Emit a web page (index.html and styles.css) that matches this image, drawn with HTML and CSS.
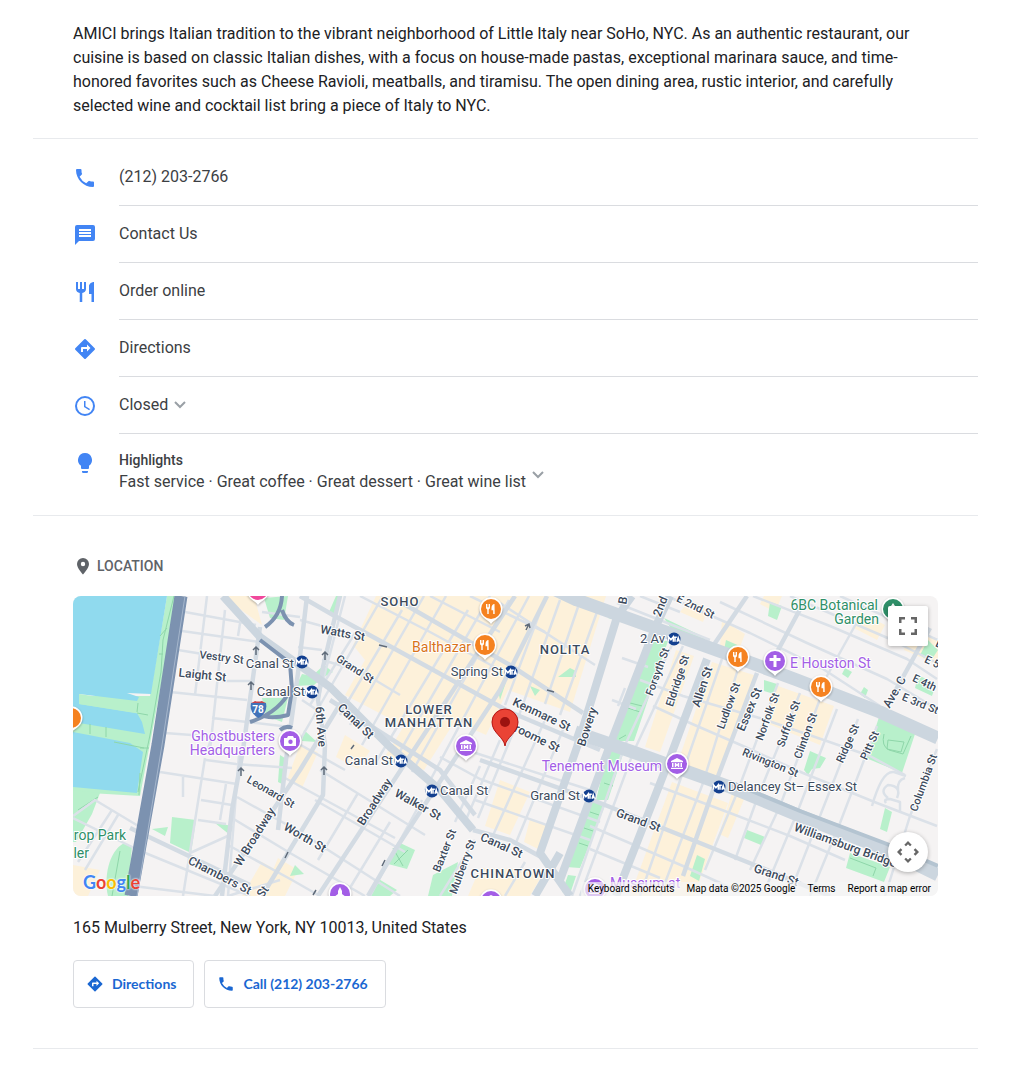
FILE: index.html
```
<!DOCTYPE html>
<html lang="en">
<head>
    <meta charset="UTF-8">
    <meta name="viewport" content="width=device-width, initial-scale=1.0">
    <title>AMICI - Little Italy, NYC</title>
    <link rel="stylesheet" href="styles.css">
</head>
<body>

<main class="page">

    <!-- About -->
    <section class="about">
        <p>AMICI brings Italian tradition to the vibrant neighborhood of Little Italy near SoHo, NYC. As an authentic restaurant, our cuisine is based on classic Italian dishes, with a focus on house-made pastas, exceptional marinara sauce, and time-honored favorites such as Cheese Ravioli, meatballs, and tiramisu. The open dining area, rustic interior, and carefully selected wine and cocktail list bring a piece of Italy to NYC.</p>
    </section>

    <!-- Contact list -->
    <section class="details">
        <ul class="detail-list">
            <li class="detail">
                <svg class="icon" viewBox="0 0 24 24"><path d="M6.500 3H4a1 1 0 0 0-1 1c0 9.400 7.600 17 17 17a1 1 0 0 0 1-1v-3.500a1 1 0 0 0-1-1c-1.200 0-2.400-.2-3.600-.6a1 1 0 0 0-1 .25l-2.200 2.200a15 15 0 0 1-6.600-6.600l2.200-2.200a1 1 0 0 0 .25-1C8.700 7.400 8.500 6.200 8.500 4a1 1 0 0 0-1-1z"/></svg>
                <a class="detail-body" href="tel:+12122032766">(212) 203-2766</a>
            </li>
            <li class="detail">
                <svg class="icon" viewBox="0 0 24 24"><path d="M20 2H4a2 2 0 0 0-2 2v18l4-4h14a2 2 0 0 0 2-2V4a2 2 0 0 0-2-2zm-2 12H6v-2h12zm0-3H6V9h12zm0-3H6V6h12z"/></svg>
                <a class="detail-body" href="#contact">Contact Us</a>
            </li>
            <li class="detail">
                <svg class="icon" viewBox="0 0 24 24"><path d="M11 9H9V2H7v7H5V2H3v7c0 2.120 1.660 3.840 3.750 3.970V22h2.500v-9.030C11.340 12.840 13 11.120 13 9V2h-2zm5-3v8h2.500v8H21V2c-2.760 0-5 2.240-5 4z"/></svg>
                <a class="detail-body" href="#order">Order online</a>
            </li>
            <li class="detail">
                <svg class="icon" viewBox="0 0 24 24"><path d="M21.700 11.300l-9-9a1 1 0 0 0-1.400 0l-9 9a1 1 0 0 0 0 1.400l9 9a1 1 0 0 0 1.400 0l9-9a1 1 0 0 0 0-1.400zM14 14.500V12h-4v3H8v-4a1 1 0 0 1 1-1h5V7.500l3.500 3.500z"/></svg>
                <a class="detail-body" href="#directions">Directions</a>
            </li>
            <li class="detail">
                <svg class="icon" viewBox="0 0 24 24"><path d="M12 2a10 10 0 1 0 0 20 10 10 0 0 0 0-20zm0 18a8 8 0 1 1 0-16 8 8 0 0 1 0 16zm.5-13H11v6l5.200 3.200.8-1.300-4.500-2.700z"/></svg>
                <button type="button" class="detail-body">
                    Closed
                    <svg class="chevron" viewBox="0 0 12 8"><path d="M1 1l5 5 5-5"/></svg>
                </button>
            </li>
            <li class="detail highlights">
                <svg class="icon" viewBox="0 0 24 24"><path d="M9 20h6v.8a1.200 1.200 0 0 1-1.200 1.200h-3.600A1.200 1.200 0 0 1 9 20.800zM12 2a7 7 0 0 0-4 12.740V17a1 1 0 0 0 1 1h6a1 1 0 0 0 1-1v-2.260A7 7 0 0 0 12 2z"/></svg>
                <button type="button" class="detail-body">
                    <span class="highlight-text">
                        <strong>Highlights</strong>
                        <span>Fast service · Great coffee · Great dessert · Great wine list</span>
                    </span>
                    <svg class="chevron" viewBox="0 0 12 8"><path d="M1 1l5 5 5-5"/></svg>
                </button>
            </li>
        </ul>
    </section>

    <!-- Location -->
    <section class="location">
        <h2>
            <svg viewBox="0 0 20 20"><path fill-rule="evenodd" d="M10 2a6 6 0 0 0-6 6c0 4.200 6 10.500 6 10.500S16 12.200 16 8a6 6 0 0 0-6-6zm0 8.200a2.200 2.200 0 1 1 0-4.400 2.200 2.200 0 0 1 0 4.400z"/></svg>
            Location
        </h2>

        <div class="map">
            <svg class="map-canvas" viewBox="73 596 865 300" preserveAspectRatio="xMidYMid slice" role="img" aria-label="Map of Lower Manhattan">
                <defs>
                    <g id="pin-shape">
                        <path class="pin-edge" d="M0 15C-2 12-5 11-8 8A11.500 11.500 0 1 1 8 8C5 11 2 12 0 15z"/>
                        <circle r="10"/>
                    </g>
                    <g id="pin-food">
                        <use href="#pin-shape"/>
                        <path class="glyph" d="M-5-5v3.500a2 2 0 0 0 1.300 1.900V5h1.400V.4A2 2 0 0 0-1-1.500V-5h-1v3.300h-.6V-5h-.8v3.300H-4V-5zM3.500-5C1.500-5 .5-3 .5-1v2.200h1.700V5h1.500z"/>
                    </g>
                    <g id="pin-museum">
                        <use href="#pin-shape"/>
                        <path class="glyph" d="M0-6l6 3v1.200H-6V-3zM-5-1h1.500v4H-5zM3.500-1H5v4H3.500zM-2.300-1h1.300l1 1.500L1-1h1.300v4H1V1.500L0 2.700l-1-1.200V3h-1.300zM-6 3.700H6V5H-6z"/>
                    </g>
                    <g id="mta">
                        <circle r="6.500"/>
                        <path d="M-5.500 2.800v-5l2.400 3 2.400-3v5M-.7-1.800h3.500M1 -1.800v4.600M3 2.800l1.200-4 1.300 4"/>
                    </g>
                </defs>

                <rect class="land" x="0" y="500" width="1100" height="500"/>

                <!-- Built-up areas -->
                <g class="built">
                    <path d="M376 596H548L508 690 486 735 455 721 424 770 384 758 404 726 345 695 365 660 353 645z"/>
                    <path d="M548 596H606L570 712 508 690z"/>
                    <path d="M223 596H254L262 625 244 612zM318 752L302 788 287 780 300 745zM345 735L370 751 358 769 336 757z"/>
                    <path d="M676 650L694 656 660 752 645 747zM712 662L757 676 717 779 678 762zM778 686L834 706 820 745 764 722z"/>
                    <path d="M672 782L728 803 694 896H630zM733 790L745 797 728 838 719 834zM690 600L708 609 703 622 680 612z"/>
                    <path d="M500 780L530 792 510 835 485 826zM530 819L550 827 540 850 524 842zM480 868L545 870 530 896H468z"/>
                    <path d="M722 620L745 634 738 652 720 646zM764 596H782L775 612 760 604zM860 612L885 625 877 640 854 628zM910 625L938 640V665L904 650z"/>
                    <path d="M100 870L88 896H73V865zM262 862L288 876 276 896H242zM278 858L298 870 285 896H262z"/>
                </g>

                <!-- Water and piers -->
                <g class="park">
                    <path d="M73 732V696H150L167 596H178L140 796 73 792z"/>
                    <path d="M73 790L100 793 92 814 76 842 73 842zM124 843L132 846 128 896H108C104 878 108 852 124 843z"/>
                    <path d="M172 817L196 820 191 853 170 843zM152 829L168 827 165 836zM215 823L233 826 230 835z"/>
                </g>
                <g class="water">
                    <path d="M73 596H167L151 694 127 693 139 697 137 701 79 694V704L137 713 142 722 145 734 73 722z"/>
                    <path d="M73 732L130 743 143 752 137 793 73 787z"/>
                </g>
                <path class="park" d="M79 694L140 703 152 696 148 715 141 714 79 704z"/>
                <path class="park-line" d="M174 596L163 640 161 672 150 735 138 792M167 628l-7 8M163 654h-4M138 703l-1 9M148 715l-11-2M90 724v10M106 727v10M114 742l30 6M140 748h9M139 795l1-22M78 810l20-13M112 896l8-45"/>

                <!-- Parks -->
                <g class="park">
                    <path d="M264 598L288 596 284 620 270 618zM262 698L288 698 282 722 266 716zM336 596H342L335 614 329 612zM324 665L333 672 322 678 314 685 296 686 302 674 312 676z"/>
                    <path d="M304 730L317 742 302 741zM280 755L288 760 284 785 278 782zM295 865L304 874 290 876z"/>
                    <path d="M398 842L415 850 407 869 388 864zM377 878L397 890 390 896H371zM433 875L458 862 452 896H428z"/>
                    <path d="M649 640L668 641 634 741 615 741zM608 751H624L608 800 596 800zM588 800L606 803 580 868 566 867zM568 875L576 876 570 894 562 892z"/>
                    <path d="M608 611L655 622 648 630 608 618zM664 618L706 638 702 645 676 636zM570 668L576 671 576 677 558 677zM530 686L540 690 535 696zM506 682L498 690 500 700z"/>
                    <path d="M770 602L782 606 777 620 768 616zM726 640L742 647 740 656 724 650zM764 680L777 684 774 694 764 691z"/>
                    <path d="M879 717L915 734 902 773 866 758zM845 668L852 672 848 678 842 674zM864 687L868 690 865 698 860 694zM928 640L938 650 930 662 920 655zM918 675L936 684 932 696 915 688z"/>
                    <path d="M810 751L826 758 820 768 812 769 808 775 804 770zM885 808L892 812 887 832 880 829zM747 830L765 837 761 845 744 838zM850 853L890 867 884 882 846 868zM697 855L705 859 699 881 690 876z"/>
                </g>
                <path class="park-line" d="M630 703l12 3M628 708l12 4M626 735l-7 4M611 765l9 3M604 783l9 3M590 812l9 3M584 828l9 3M579 843l9 3M884 734q-3 12 5 16l14 4 8-18M888 740l16 2-3 10-14-3zM393 848l10 18M408 850l-14 14M850 858l26 10-3 8"/>

                <!-- Side streets -->
                <g class="street">
                    <path d="M207 596L195 695M225 610L210 750M241 617l-3 19M185 612L256 625M182 631L260 642M178 650L215 656M170 692L247 700M212 718L290 727M165 733L205 736M222 681H250M212 737l-5 14"/>
                    <path d="M160 772L237 784M206 760L236 764 292 768M205 758L183 896M239 755L228 896M183 777v20M201 800L232 805M198 820L226 824M226 784L220 820"/>
                    <path d="M73 816L95 800 145 830M73 818L128 845 138 850M118 815L85 870M112 810L78 862M138 850L250 896M125 885L215 896M190 853L230 835"/>
                    <path d="M237 797L300 832 400 896M232 818L290 853 365 896M228 845L292 880 320 896M283 735L345 770M285 778L395 838M320 770L425 835M315 800L405 852M280 880L228 896"/>
                    <path d="M262 612L300 617M300 620L333 629M298 647L322 650M322 660L350 668M345 596L318 700M355 633L310 705M302 700L320 712"/>
                    <path d="M383 596L300 740M402 610L340 715M424 596L350 725M446 596L362 745M468 610L376 762M490 596L395 760M509 600L412 772M529 596L425 790"/>
                    <path d="M360 596L430 632 500 670M355 668L400 695M430 596L500 632M470 596L545 632"/>
                    <path d="M560 600L528 690 512 735 478 818M578 607L545 704M597 612L560 715M540 612L505 705M500 603L595 665M565 725L515 845M545 720L490 842M612 700L636 709M622 658L648 667M625 688l-7 18"/>
                    <path d="M440 757L480 779 600 822M460 748L590 790M480 766L455 822M500 740L465 822M475 800L590 840M525 862L505 896"/>
                    <path d="M390 822L345 896M422 800L370 896M358 793L318 860M475 840L440 896"/>

                    <!-- Lower East Side -->
                    <path d="M672 645L625 745 572 896M683 646L633 753 580 896M722 659L685 766 640 896M738 669L703 783 660 896M778 683L737 793 705 870M800 693L757 799 735 860M820 699L780 806 750 870M837 709L797 813 765 890M858 719L820 816 795 880M877 726L840 823 810 896M937 749L910 816 885 896"/>
                    <path d="M640 680L683 696 763 719 870 756 905 775M653 706L690 723 743 746 803 773 877 803 937 826M650 783L730 813 790 836 845 860M590 826L683 866 740 892M590 849L660 878"/>

                    <!-- East Village -->
                    <path d="M617 603L710 640M667 596L750 633 823 669 880 706M720 602L807 643 887 679 937 709M753 596L830 626 907 659 937 679M790 596L890 639 937 663M840 596L938 640M857 622L823 683M640 596L680 612"/>
                    <path d="M872 806q10-36 22-34l12 4M905 778q-8 2-7 12M888 798q-9-7 0-13 14 1 9 13M886 803q-3-4 4-4l10 3v9"/>
                </g>

                <!-- Main streets -->
                <g class="road">
                    <path d="M307 596L298 673 286 760 278 830M340 596L323 667 318 700 325 745 323 795 262 896M300 596L333 615 510 712 600 750"/>
                    <path d="M260 627L243 750 232 810 222 896M397 600L510 665 583 713M515 596L318 896M547 596L500 690 395 850 368 896M590 799L690 839 757 866 830 896M590 799L480 760M130 828L250 885M757 673L717 779 683 876M747 596L713 646M805 600L777 652M930 628L887 706"/>
                    <path d="M345 696L300 770 215 896M473 830L510 840 543 858M330 700L440 770 475 815"/>
                </g>

                <!-- Avenues -->
                <g class="avenue">
                    <path d="M223 596L260 637 330 687 390 747 440 790 473 830M632 596L617 617 577 747 540 853 570 896M653 633L613 737 560 880M670 596L655 628M707 659L668 763 616 896M560 853L535 896"/>
                </g>
                <g class="avenue wide">
                    <path d="M545 585L577 600 730 655 797 680 880 712 938 738"/>
                    <path d="M575 732L633 752 730 787 800 816 887 850 938 875"/>
                </g>
                <path class="bridge" d="M735 784L800 811 887 844 938 866"/>

                <!-- Highways -->
                <g class="highway">
                    <path class="trunk" d="M181 596L158 745 131 896"/>
                    <path class="lanes" d="M185 596L162 745 137 896"/>
                    <path class="ramp" d="M282 596Q281 616 265 627M282 610Q286 622 294 625M260 640L290 663 292 690 288 715Q270 720 258 714M290 690Q280 712 250 722M280 730Q286 725 292 728"/>
                </g>
                <path class="arrow" d="M256 655v-8m-3 3l3-3 3 3M251 690v-8m-3 3l3-3 3 3M325 660v-8m-3 3l3-3 3 3M526 630l3-6m-4 2l4-2 1 4M379 645l8 2M547 690l7 2M241 776v-8m-3 3l3-3 3 3M324 775v-8m-3 3l3-3 3 3M385 860l-3 6M316 890l-3 5M285 858l3-6M354 745l-3 4"/>

                <!-- Street names -->
                <g class="street-name">
                    <text transform="translate(342 637) rotate(10)">Watts St</text>
                    <text class="small" transform="translate(353 672) rotate(33)">Grand St</text>
                    <text transform="translate(353 724) rotate(44)">Canal St</text>
                    <text transform="translate(317 727) rotate(86)">6th Ave</text>
                    <text class="small" transform="translate(221 661) rotate(7)">Vestry St</text>
                    <text transform="translate(202 679) rotate(6)">Laight St</text>
                    <text transform="translate(540 718) rotate(25)">Kenmare St</text>
                    <text transform="translate(532 740) rotate(26)">Broome St</text>
                    <text transform="translate(591 728) rotate(-72)">Bowery</text>
                    <text transform="translate(627 601) rotate(-80)">B</text>
                    <text transform="translate(664 608) rotate(-68)">2nd</text>
                    <text class="small" transform="translate(694 610) rotate(26)">E 2nd St</text>
                    <text class="small" transform="translate(661 673) rotate(-70)">Forsyth St</text>
                    <text class="small" transform="translate(681 682) rotate(-72)">Eldridge St</text>
                    <text transform="translate(706 688) rotate(-72)">Allen St</text>
                    <text class="small" transform="translate(732 707) rotate(-70)">Ludlow St</text>
                    <text transform="translate(753 711) rotate(-67)">Essex St</text>
                    <text class="small" transform="translate(771 718) rotate(-70)">Norfolk St</text>
                    <text class="small" transform="translate(792 725) rotate(-70)">Suffolk St</text>
                    <text class="small" transform="translate(809 737) rotate(-70)">Clinton St</text>
                    <text class="small" transform="translate(851 745) rotate(-66)">Ridge St</text>
                    <text class="small" transform="translate(873 747) rotate(-66)">Pitt St</text>
                    <text transform="translate(898 694) rotate(-60)">Ave. C</text>
                    <text class="small" transform="translate(952 654) rotate(25)">E 6th St</text>
                    <text class="small" transform="translate(941 670) rotate(25)">E 5th St</text>
                    <text class="small" transform="translate(923 686) rotate(25)">E 4th</text>
                    <text class="small" transform="translate(919 707) rotate(22)">E 3rd St</text>
                    <text class="small" transform="translate(927 784) rotate(-70)">Columbia St</text>
                    <text class="small" transform="translate(769 766) rotate(22)">Rivington St</text>
                    <text transform="translate(844 849) rotate(20)">Williamsburg Bridge</text>
                    <text transform="translate(775 879) rotate(18)">Grand St</text>
                    <text transform="translate(637 824) rotate(20)">Grand St</text>
                    <text transform="translate(416 808) rotate(29)">Walker St</text>
                    <text transform="translate(378 804) rotate(-57)">Broadway</text>
                    <text transform="translate(258 839) rotate(-58)">W Broadway</text>
                    <text class="small" transform="translate(269 795) rotate(30)">Leonard St</text>
                    <text transform="translate(303 841) rotate(30)">Worth St</text>
                    <text transform="translate(218 879) rotate(27)">Chambers St</text>
                    <text transform="translate(266 894) rotate(-55)">St</text>
                    <text class="small" transform="translate(448 852) rotate(-68)">Baxter St</text>
                    <text class="small" transform="translate(466 868) rotate(-70)">Mulberry St</text>
                    <text transform="translate(500 849) rotate(24)">Canal St</text>
                </g>

                <!-- Neighborhoods -->
                <g class="hood">
                    <text x="400" y="606">SOHO</text>
                    <text x="565" y="654">NOLITA</text>
                    <text x="429" y="714">LOWER</text>
                    <text x="429" y="727">MANHATTAN</text>
                    <text x="513" y="878">CHINATOWN</text>
                </g>

                <!-- Subway stations -->
                <g class="mta">
                    <use href="#mta" x="302" y="662"/>
                    <use href="#mta" x="312" y="692"/>
                    <use href="#mta" x="401" y="761"/>
                    <use href="#mta" x="432" y="791"/>
                    <use href="#mta" x="511" y="672"/>
                    <use href="#mta" x="674" y="639"/>
                    <use href="#mta" x="589" y="796"/>
                    <use href="#mta" x="719" y="787"/>
                </g>
                <g class="station">
                    <text class="end" x="294" y="668">Canal St</text>
                    <text class="end" x="305" y="696">Canal St</text>
                    <text class="end" x="393" y="765">Canal St</text>
                    <text x="440" y="795">Canal St</text>
                    <text class="end" x="503" y="676">Spring St</text>
                    <text class="end" x="665" y="643">2 Av</text>
                    <text class="end" x="580" y="800">Grand St</text>
                    <text x="728" y="791">Delancey St– Essex St</text>
                </g>

                <!-- Interstate shield -->
                <path class="shield-blue" d="M251 703h15q2 10-7.500 15-9.500-5-7.500-15z"/>
                <path class="shield-red" d="M251 703q3-1 4-2 3 1 7 0 1 1 4 2z"/>
                <text class="shield-text" x="258" y="713">78</text>

                <!-- Places -->
                <g class="poi culture">
                    <text class="end" x="275" y="741">Ghostbusters</text>
                    <text class="end" x="275" y="755">Headquarters</text>
                    <text class="end" x="662" y="771">Tenement Museum</text>
                    <text x="790" y="668">E Houston St</text>
                    <text x="610" y="888">Museum at</text>
                    <use href="#pin-museum" x="466" y="746"/>
                    <use href="#pin-museum" x="677" y="764"/>
                    <use href="#pin-museum" x="595" y="889"/>
                    <use href="#pin-museum" x="491" y="901"/>
                    <use href="#pin-shape" x="290" y="741"/>
                    <path class="glyph" fill-rule="evenodd" d="M284 738h3l1-2h5l1 2h2v8h-12zM290.500 739.500a2.200 2.200 0 1 0 0 4.400 2.200 2.200 0 0 0 0-4.400z"/>
                    <use href="#pin-shape" x="775" y="661"/>
                    <path class="glyph" d="M773.500 655h3v3h4v3h-4v6h-3v-6h-4v-3h4z"/>
                    <use href="#pin-shape" x="340" y="894"/>
                    <path class="glyph" d="M340 887l2 4v3l4 3h-12l4-3v-3z"/>
                </g>
                <g class="poi food">
                    <text class="end" x="471" y="652">Balthazar</text>
                    <use href="#pin-food" x="491" y="609"/>
                    <use href="#pin-food" x="485" y="645"/>
                    <use href="#pin-food" x="738" y="657"/>
                    <use href="#pin-food" x="821" y="687"/>
                    <use href="#pin-shape" x="71" y="718"/>
                </g>
                <g class="poi nature">
                    <text class="end" x="878" y="610">6BC Botanical</text>
                    <text class="end" x="879" y="624">Garden</text>
                    <text class="end" x="126" y="840">rop Park</text>
                    <text class="end" x="89" y="858">ler</text>
                    <use href="#pin-shape" x="893" y="609"/>
                    <path class="glyph" d="M893 603l4 6h-3v4h-2v-4h-3z"/>
                </g>
                <g class="poi hotel"><use href="#pin-shape" x="258" y="590"/></g>

                <!-- Restaurant marker -->
                <path class="marker" d="M505 746c-1-9-13-13-13-24a13 13 0 0 1 26 0c0 11-12 15-13 24z"/>
                <circle class="marker-dot" cx="505" cy="722" r="5"/>
            </svg>

            <a class="map-logo" href="#map" aria-label="Google"><span class="blue">G</span><span class="red">o</span><span class="yellow">o</span><span class="blue">g</span><span class="green">l</span><span class="red">e</span></a>

            <button type="button" class="map-button fullscreen" aria-label="Toggle fullscreen view">
                <svg viewBox="0 0 18 18"><path d="M0 0h6v2.500H2.500V6H0zM12 0h6v6h-2.500V2.500H12zM0 12h2.500v3.500H6V18H0zM15.500 12H18v6h-6v-2.500h3.500z"/></svg>
            </button>
            <button type="button" class="map-button camera" aria-label="Map camera controls">
                <svg viewBox="0 0 24 24"><path d="M12 0l4 4-1.800 1.800L12 3.600 9.800 5.800 8 4zM12 24l-4-4 1.800-1.800 2.200 2.200 2.200-2.200L16 20zM0 12l4-4 1.800 1.800L3.600 12l2.200 2.200L4 16zM24 12l-4 4-1.800-1.800 2.200-2.200-2.200-2.200L20 8z"/></svg>
            </button>

            <div class="map-credits">
                <button type="button">Keyboard shortcuts</button>
                <span>Map data ©2025 Google</span>
                <a href="#terms">Terms</a>
                <a href="#report">Report a map error</a>
            </div>
        </div>

        <p class="address">165 Mulberry Street, New York, NY 10013, United States</p>

        <div class="actions">
            <a class="action" href="#directions">
                <svg viewBox="0 0 24 24"><path d="M21.700 11.300l-9-9a1 1 0 0 0-1.400 0l-9 9a1 1 0 0 0 0 1.400l9 9a1 1 0 0 0 1.400 0l9-9a1 1 0 0 0 0-1.400zM14 14.500V12h-4v3H8v-4a1 1 0 0 1 1-1h5V7.500l3.500 3.500z"/></svg>
                Directions
            </a>
            <a class="action" href="tel:+12122032766">
                <svg viewBox="0 0 24 24"><path d="M6.500 3H4a1 1 0 0 0-1 1c0 9.400 7.600 17 17 17a1 1 0 0 0 1-1v-3.500a1 1 0 0 0-1-1c-1.200 0-2.400-.2-3.600-.6a1 1 0 0 0-1 .25l-2.200 2.200a15 15 0 0 1-6.600-6.600l2.200-2.200a1 1 0 0 0 .25-1C8.700 7.400 8.500 6.200 8.500 4a1 1 0 0 0-1-1z"/></svg>
                Call (212) 203-2766
            </a>
        </div>
    </section>

</main>

</body>
</html>
```

FILE: styles.css
```
* {
    box-sizing: border-box;
}

body {
    font-family: Roboto, Arial, sans-serif;
    font-size: 16px;
    line-height: 24px;
    color: #202124;
    background-color: #fff;
    margin: 0;
}

a {
    color: inherit;
    text-decoration: none;
}

button {
    font: inherit;
    color: inherit;
    background: none;
    border: none;
    padding: 0;
    cursor: pointer;
}

.page {
    padding: 0 32px 0 33px;
}

.about,
.details,
.location {
    border-bottom: 1px solid #e8eaed;
    padding-left: 40px;
}

/* About */
.about {
    padding-top: 22px;
    padding-right: 40px;
    padding-bottom: 20px;
}

.about p {
    margin: 0;
}

/* Contact list */
.details {
    padding-top: 10px;
}

.detail-list {
    list-style: none;
    margin: 0;
    padding: 0;
}

.detail {
    display: flex;
    gap: 22px;
    color: #3c4043;
}

.icon {
    flex: none;
    width: 24px;
    height: 24px;
    margin-top: 17px;
    fill: #4285f4;
}

.detail-body {
    display: flex;
    align-items: center;
    gap: 6px;
    flex: 1;
    height: 57px;
    border-bottom: 1px solid #dadce0;
    text-align: left;
}

.chevron {
    width: 12px;
    height: 8px;
    fill: none;
    stroke: #9aa0a6;
    stroke-width: 2;
}

.highlights .detail-body {
    height: 81px;
    border-bottom: none;
}

.highlight-text {
    padding-bottom: 8px;
}

.highlight-text strong,
.highlight-text span {
    display: block;
    line-height: 21px;
}

.highlight-text strong {
    font-size: 14px;
    font-weight: 500;
}

/* Location */
.location {
    padding-top: 38px;
    padding-right: 40px;
    padding-bottom: 40px;
}

.location h2 {
    display: flex;
    align-items: center;
    gap: 4px;
    margin: 0 0 18px;
    font-size: 14px;
    font-weight: 500;
    line-height: 24px;
    text-transform: uppercase;
    color: #5f6368;
}

.location h2 svg {
    width: 20px;
    height: 20px;
    fill: #5f6368;
}

.map {
    position: relative;
    height: 300px;
    border-radius: 8px;
    overflow: hidden;
}

.map-canvas {
    display: block;
    width: 100%;
    height: 100%;
}

.land { fill: #f5f3f3; }
.built { fill: #fdf1da; }
.water { fill: #90daee; }
.park { fill: #b8f0cb; }

.park-line {
    fill: none;
    stroke: #8ed6a9;
    stroke-width: 1;
}

.street,
.road,
.avenue {
    fill: none;
    stroke: #dbe1e8;
    stroke-linejoin: round;
}

.street { stroke-width: 2.5; }
.road { stroke: #d3dbe3; stroke-width: 4.5; }
.avenue { stroke: #ccd6df; stroke-width: 8; }
.avenue.wide { stroke-width: 13; }

.bridge {
    fill: none;
    stroke: #b4c4d1;
    stroke-width: 4;
}

.highway {
    fill: none;
    stroke: #7c92b0;
    stroke-linejoin: round;
}

.trunk { stroke-width: 13; }
.lanes { stroke: #a5b6cc; stroke-width: 1; }
.ramp { stroke-width: 4; }

.arrow {
    fill: none;
    stroke: #5f6b7a;
    stroke-width: 1.5;
}

.map-canvas text {
    font-size: 13px;
    fill: #3c4a5c;
    stroke: #fff;
    stroke-width: 2;
    stroke-linejoin: round;
    paint-order: stroke;
}

.street-name text,
.hood text,
.map-canvas .shield-text {
    text-anchor: middle;
}

.map-canvas .street-name text {
    font-size: 12px;
    font-weight: 500;
}

.map-canvas .street-name .small {
    font-size: 11px;
}

.map-canvas .poi text {
    font-size: 14px;
}

.hood text {
    font-weight: 500;
    letter-spacing: 1px;
}

.map-canvas .end {
    text-anchor: end;
}

.mta {
    fill: #123f8f;
}

#mta path {
    fill: none;
    stroke: #fff;
    stroke-width: 1.5;
}

.shield-blue { fill: #4272b8; }
.shield-red { fill: #c7434c; }

.map-canvas .shield-text {
    font-size: 10px;
    font-weight: 700;
    fill: #fff;
    stroke: none;
}

.culture,
.map-canvas .culture text { fill: #a35ee6; }

.food { fill: #f58220; }
.map-canvas .food text { fill: #d9731a; }

.nature,
.map-canvas .nature text { fill: #2f8f68; }

.hotel { fill: #f0489b; }

.pin-edge {
    fill: #fff;
    filter: drop-shadow(0 1px 1px rgba(0, 0, 0, 0.3));
}

.glyph { fill: #fff; }

.marker {
    fill: #ea4335;
    stroke: #b31412;
    stroke-width: 1;
}

.marker-dot { fill: #9c1310; }

.map-logo {
    position: absolute;
    left: 10px;
    bottom: 2px;
    font-family: Lato, sans-serif;
    font-size: 18px;
    font-weight: 700;
    line-height: 24px;
    text-shadow: 0 0 2px #fff, 0 0 2px #fff;
}

.blue { color: #4285f4; }
.red { color: #ea4335; }
.yellow { color: #fbbc04; }
.green { color: #34a853; }

.map-button {
    position: absolute;
    right: 10px;
    display: flex;
    align-items: center;
    justify-content: center;
    width: 40px;
    height: 40px;
    background-color: #fff;
    border-radius: 2px;
    box-shadow: 0 1px 4px rgba(0, 0, 0, 0.3);
}

.map-button svg {
    width: 18px;
    height: 18px;
    fill: #666;
}

.fullscreen {
    top: 10px;
}

.camera {
    bottom: 24px;
    border-radius: 50%;
}

.camera svg {
    width: 22px;
    height: 22px;
}

.map-credits {
    position: absolute;
    right: 0;
    bottom: 0;
    display: flex;
    gap: 12px;
    padding: 0 7px;
    font-size: 10px;
    line-height: 14px;
    color: #000;
    background-color: rgba(245, 245, 245, 0.7);
}

.address {
    margin: 20px 0;
}

.actions {
    display: flex;
    gap: 10px;
}

.action {
    display: flex;
    align-items: center;
    gap: 8px;
    height: 48px;
    padding: 0 17px 0 12px;
    border: 1px solid #dadce0;
    border-radius: 4px;
    font-family: Lato, sans-serif;
    font-size: 14px;
    font-weight: 700;
    color: #1a67d2;
}

.action svg {
    width: 18px;
    height: 18px;
    fill: #1a67d2;
}
```
